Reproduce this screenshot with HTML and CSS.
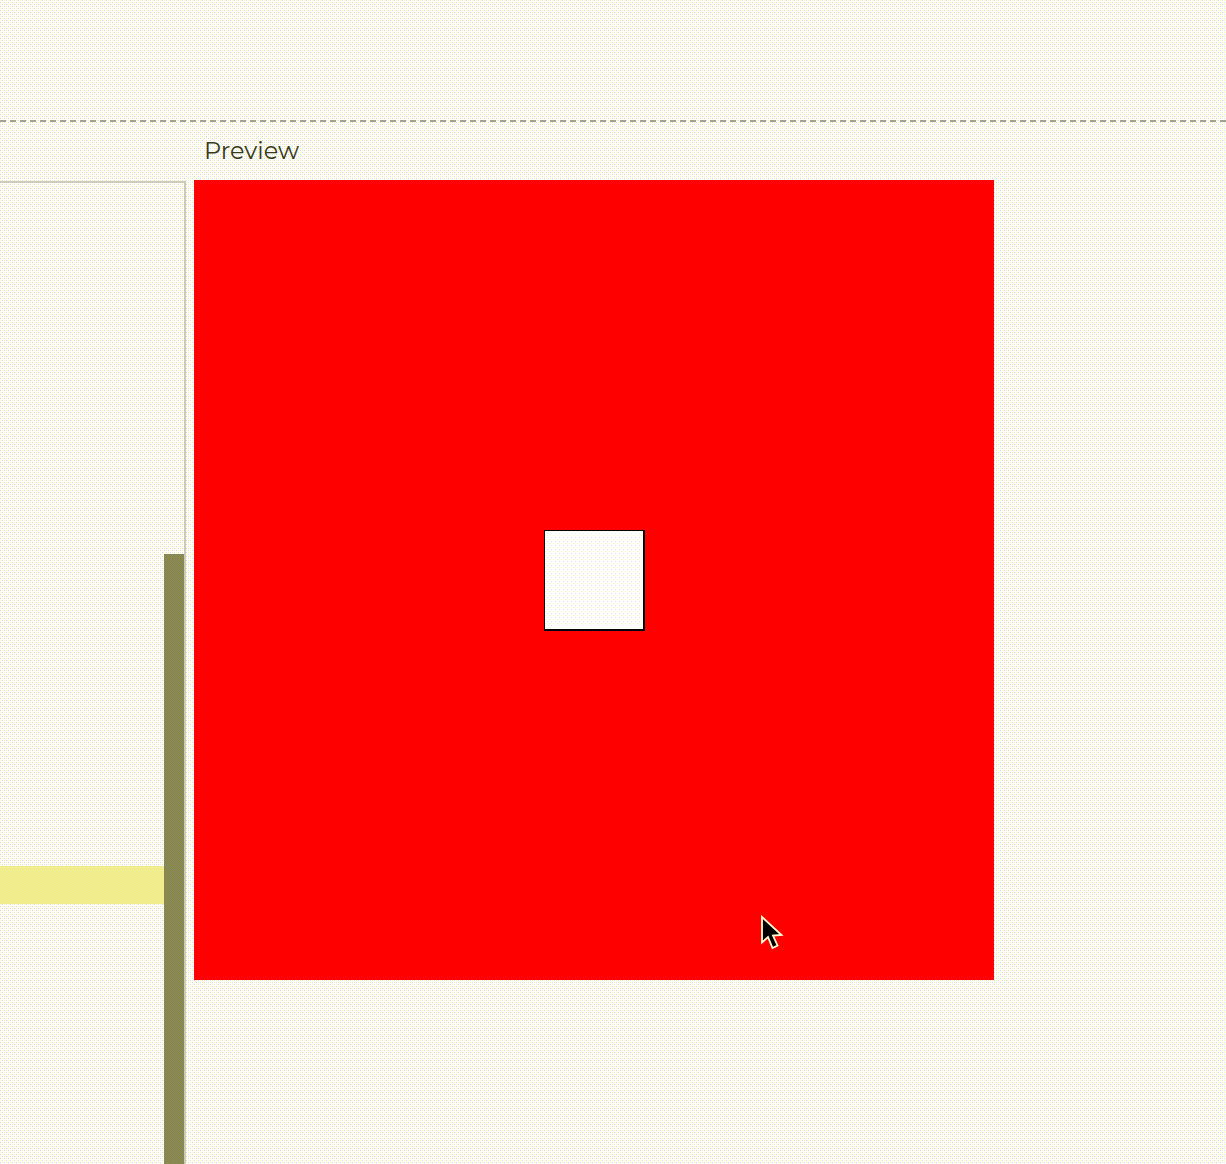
FILE: index.html
```html
<!DOCTYPE html>
<html lang="en">
<head>
<meta charset="utf-8">
<title>Preview</title>
<link rel="stylesheet" href="styles.css">
</head>
<body>
<div class="page">
  <header class="top"></header>
  <main class="workspace">
    <aside class="panel">
      <div class="list">
        <div class="row"></div>
      </div>
      <div class="thumb"></div>
    </aside>
    <section class="preview">
      <h2 class="title">Preview</h2>
      <div class="stage">
        <div class="box"></div>
        <svg class="cursor" width="24" height="36" viewBox="0 0 24 36" aria-hidden="true">
          <path d="M2 2 L2 27.5 L8 22 L12.5 33 L17.5 30.5 L13 20.5 L21.5 20 Z" fill="#000" stroke="#fffbd0" stroke-width="1.8" stroke-linejoin="miter"/>
        </svg>
      </div>
    </section>
  </main>
</div>
</body>
</html>
```

FILE: styles.css
```css
* {
  box-sizing: border-box;
}

html,
body {
  margin: 0;
  height: 100%;
  overflow: hidden;
}

body {
  background-color: #ffffff;
  background-image: url("data:image/svg+xml,%3Csvg xmlns='http://www.w3.org/2000/svg' width='4' height='4' shape-rendering='crispEdges'%3E%3Crect width='1' height='1' fill='%23fdfaa4'/%3E%3Crect x='2' y='2' width='1' height='1' fill='%23fdfaa4'/%3E%3Crect x='2' width='1' height='1' fill='%23dad8f6'/%3E%3Crect y='2' width='1' height='1' fill='%23dad8f6'/%3E%3C/svg%3E");
  background-size: 4px 4px;
  font-family: "Montserrat", "Inter", "Noto Sans", sans-serif;
}

.page {
  display: flex;
  flex-direction: column;
  height: 1164px;
}

.top {
  flex: none;
  height: 122px;
  border-bottom: 2px dashed #a3a28f;
}

.workspace {
  flex: 1;
  display: flex;
  min-height: 0;
}

.panel {
  position: relative;
  flex: none;
  width: 186px;
  margin-top: 59px;
  border-top: 2px solid #cbcbb8;
  border-right: 2px solid #cbcbb8;
}

.list {
  padding-top: 683px;
  padding-right: 20px;
}

.row {
  height: 38px;
  background-image: repeating-conic-gradient(#f4f07c 0 25%, #edea9e 0 50%);
  background-size: 2px 2px;
}

.thumb {
  position: absolute;
  top: 371px;
  right: 0;
  bottom: 0;
  width: 20px;
  background-image: repeating-conic-gradient(#8d8c48 0 25%, #84835a 0 50%);
  background-size: 2px 2px;
}

.preview {
  flex: none;
  padding-left: 8px;
}

.title {
  margin: 0;
  height: 58px;
  padding: 12px 0 0 10px;
  font-size: 24px;
  font-weight: 400;
  line-height: 34px;
  color: #3a3a18;
}

.stage {
  position: relative;
  display: flex;
  align-items: center;
  justify-content: center;
  width: 800px;
  height: 800px;
  background: #ff0000;
}

.box {
  width: 101px;
  height: 101px;
  margin-right: -1px;
  background-color: #ffffff;
  background-image: url("data:image/svg+xml,%3Csvg xmlns='http://www.w3.org/2000/svg' width='4' height='4' shape-rendering='crispEdges'%3E%3Crect width='1' height='1' fill='%23fdfcc0'/%3E%3Crect x='2' y='2' width='1' height='1' fill='%23ecebfa'/%3E%3C/svg%3E");
  background-size: 4px 4px;
  border: 1px solid #000;
  border-right-width: 2px;
  border-bottom-width: 2px;
}

.cursor {
  position: absolute;
  left: 566px;
  top: 735px;
}
```
